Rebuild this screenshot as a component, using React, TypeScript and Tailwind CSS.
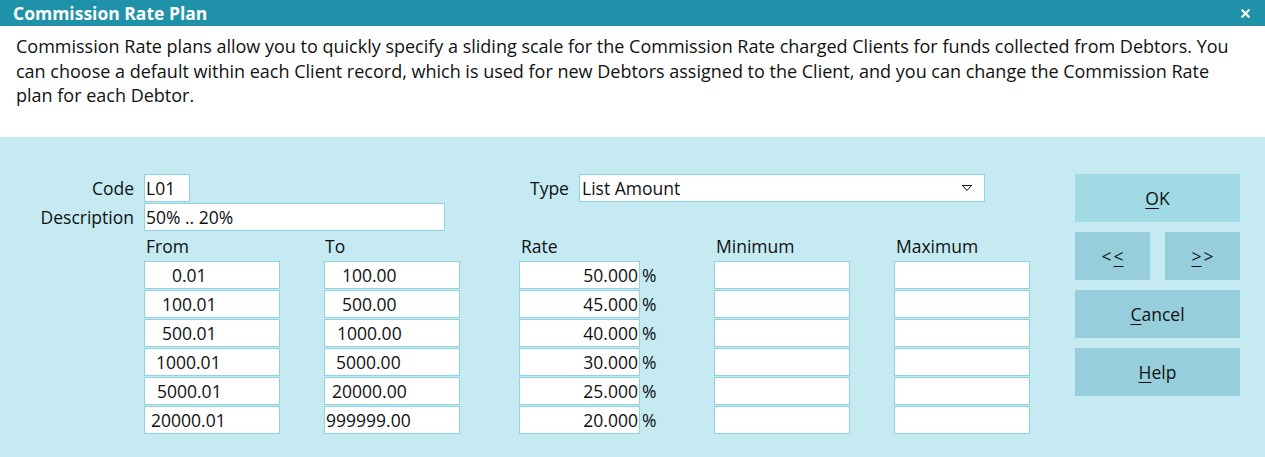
import { X } from 'lucide-react';

const FONT = "font-['Open_Sans','Noto_Sans',sans-serif]";

// the old dialog pads the figures with spaces, so each cell gets its own left padding
const ROWS = [
  { from: '0.01', fromPad: 'pl-[27px]', to: '100.00', toPad: 'pl-[17px]', rate: '50.000' },
  { from: '100.01', fromPad: 'pl-[17px]', to: '500.00', toPad: 'pl-[17px]', rate: '45.000' },
  { from: '500.01', fromPad: 'pl-[17px]', to: '1000.00', toPad: 'pl-[12px]', rate: '40.000' },
  { from: '1000.01', fromPad: 'pl-[11px]', to: '5000.00', toPad: 'pl-[11px]', rate: '30.000' },
  { from: '5000.01', fromPad: 'pl-[12px]', to: '20000.00', toPad: 'pl-[7px]', rate: '25.000' },
  { from: '20000.01', fromPad: 'pl-[6px]', to: '999999.00', toPad: 'pl-[1px]', rate: '20.000' },
];

const box = 'h-[28px] bg-white border border-[#8fd3e0] flex items-center text-[#111] text-[17.5px]';

function DialogButton({
  children,
  className = '',
}: {
  children: React.ReactNode;
  className?: string;
}) {
  return (
    <button
      type="button"
      className={`h-[48px] flex items-center justify-center text-[17.5px] text-[#111] ${className}`}
    >
      {children}
    </button>
  );
}

export default function App() {
  return (
    <div className={`w-[1265px] h-[457px] flex flex-col bg-white ${FONT}`}>
      <div className="h-[26px] bg-[#1f91a9] flex items-center justify-between pl-[13px] pr-[13px]">
        <span className="text-white font-bold text-[17.5px]">Commission Rate Plan</span>
        <X className="w-[13px] h-[13px] text-white" strokeWidth={4} />
      </div>

      <div className="h-[111px] pl-[16px] pr-[10px] pt-[8px] text-[18px] leading-[24.5px] text-[#111] whitespace-nowrap">
        Commission Rate plans allow you to quickly specify a sliding scale for the Commission Rate charged
        Clients for funds collected from Debtors. You
        <br />
        can choose a default within each Client record, which is used for new Debtors assigned to the
        Client, and you can change the Commission Rate
        <br />
        plan for each Debtor.
      </div>

      <div className="flex-1 bg-[#c5eaf2] flex pt-[37px]">
        <div className="w-[1075px] flex flex-col text-[17.5px] text-[#111]">
          <div className="flex items-center">
            <span className="w-[144px] pr-[10px] text-right">Code</span>
            <div className={`${box} w-[46px] pl-[1px]`}>L01</div>
            <span className="ml-[340px] w-[49px]">Type</span>
            <div className={`${box} w-[406px] pl-[2px] pr-[12px] justify-between`}>
              <span>List Amount</span>
              <svg width="10" height="6" viewBox="0 0 10 6" className="text-[#111]">
                <path d="M0.5 0.5 H9.5 L5 5.5 Z" fill="none" stroke="currentColor" strokeWidth="1" />
              </svg>
            </div>
          </div>

          <div className="flex items-center mt-[1px]">
            <span className="w-[144px] pr-[10px] text-right">Description</span>
            <div className={`${box} w-[301px] pl-[1px]`}>50% .. 20%</div>
          </div>

          <div className="flex items-end h-[30px] pb-[3px] pl-[146px] leading-[24px]">
            <span className="w-[179px]">From</span>
            <span className="w-[196px]">To</span>
            <span className="w-[195px]">Rate</span>
            <span className="w-[180px]">Minimum</span>
            <span>Maximum</span>
          </div>

          <div className="flex flex-col gap-[1px]">
            {ROWS.map((row) => (
              <div key={row.from} className="flex items-center pl-[144px]">
                <div className={`${box} w-[136px] ${row.fromPad}`}>{row.from}</div>
                <div className={`${box} w-[136px] ml-[44px] ${row.toPad}`}>{row.to}</div>
                <div className={`${box} w-[121px] ml-[59px] justify-end pr-[1px]`}>{row.rate}</div>
                <span className="w-[74px] pl-[2px]">%</span>
                <div className={`${box} w-[136px]`} />
                <div className={`${box} w-[136px] ml-[44px]`} />
              </div>
            ))}
          </div>
        </div>

        <div className="w-[165px] flex flex-col gap-[10px]">
          <DialogButton className="bg-[#a0dae4]">
            <span className="underline underline-offset-[3px]">O</span>K
          </DialogButton>
          <div className="flex justify-between">
            <DialogButton className="w-[75px] bg-[#96cfdb]">
              &lt;<span className="underline underline-offset-[3px] ml-[2px]">&lt;</span>
            </DialogButton>
            <DialogButton className="w-[75px] bg-[#96cfdb]">
              <span className="underline underline-offset-[3px] mr-[2px]">&gt;</span>&gt;
            </DialogButton>
          </div>
          <DialogButton className="bg-[#96cfdb]">
            <span className="underline underline-offset-[3px]">C</span>ancel
          </DialogButton>
          <DialogButton className="bg-[#96cfdb]">
            <span className="underline underline-offset-[3px]">H</span>elp
          </DialogButton>
        </div>
      </div>
    </div>
  );
}
